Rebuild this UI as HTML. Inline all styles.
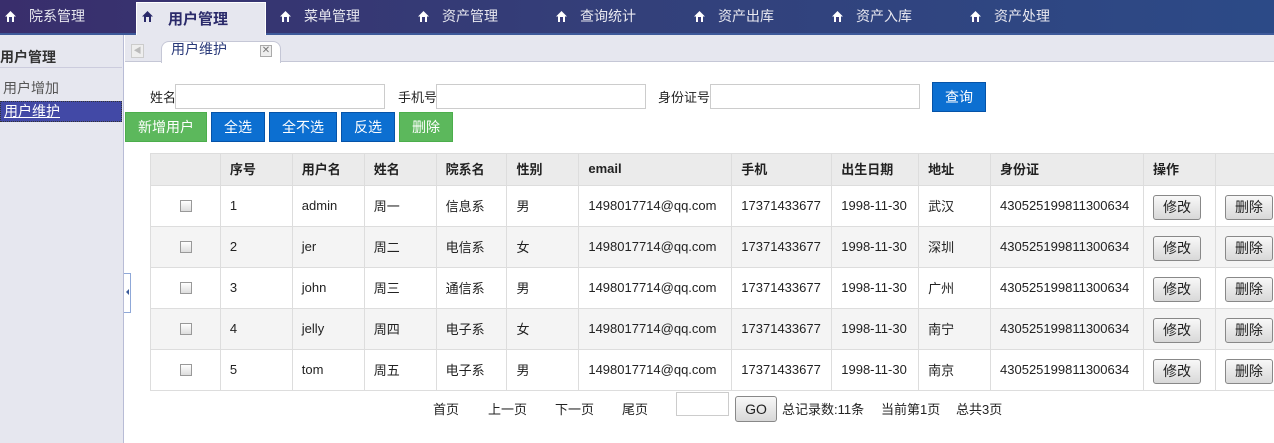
<!DOCTYPE html><html><head><meta charset="utf-8"><style>
*{margin:0;padding:0;box-sizing:border-box}
body{width:1274px;height:443px;overflow:hidden;background:#fff;font-family:"Liberation Sans","Noto Sans CJK SC",sans-serif;font-size:13px;color:#222;position:relative}
.top{position:absolute;left:0;top:0;width:1274px;height:35px;background:linear-gradient(90deg,#392e6c,#33407a 50%,#2c4a87);border-bottom:2px solid #3e5a9a}
.mi{position:absolute;top:0;height:33px;line-height:33px;color:#e8e8f0;font-size:14px}
.mi i{position:absolute;top:11px;left:0;width:11px;height:11px;display:block;line-height:0}
.mi i svg{display:block}
.mi span{position:absolute;left:24px;top:0;white-space:nowrap}
.act{position:absolute;left:136px;top:2px;width:130px;height:34px;background:#e6e7ef;border:1px solid #fff;border-bottom:none}
.act span{position:absolute;left:31px;top:5px;font-weight:bold;color:#2a2a6a;font-size:15px}
.side{position:absolute;left:0;top:35px;width:124px;height:408px;background:#e6e7ef;border-right:1px solid #b8bcd6}
.tabbar{position:absolute;left:125px;top:35px;width:1149px;height:27px;background:#e6e7ef;border-bottom:1px solid #c5c7d6}
.inp{position:absolute;top:84px;height:25px;border:1px solid #ccc;background:#fff}
.btn{position:absolute;top:112px;height:30px;line-height:28px;color:#fff;text-align:center;font-size:14px}
.g{background:#5cb85c;border:1px solid #4cae4c}.b{background:#0c6fd1;border:1px solid #0553a8}
table{position:absolute;left:150px;top:153px;border-collapse:collapse;width:1140px}
td,th{border:1px solid #ddd;height:41px;padding:0 0 2px 9px;text-align:left;font-size:13px;vertical-align:middle}
th{height:32px;background:#ebebeb;font-weight:bold;font-size:13px}
tr:nth-child(odd) td{background:#f4f4f4}
.cb{display:inline-block;width:12px;height:12px;border:1px solid #999;background:linear-gradient(#fff,#ddd);margin-left:20px;vertical-align:middle}
.ob{display:inline-block;width:48px;height:25px;border:1px solid #888;border-radius:3px;background:linear-gradient(#f8f8f8,#d8d8d8);text-align:center;line-height:23px;font-size:14px;vertical-align:middle;margin-top:4px}
.pg{position:absolute;top:399px;font-size:13px}
</style></head><body>
<div class="top"></div>
<div class="act"><span>用户管理</span></div>
<svg width="0" height="0" style="position:absolute"><defs><symbol id="h" viewBox="0 0 11 11"><path d="M5.5 0L0 5.5h2V11h7V5.5h2z" fill="#fff"/><rect x="4" y="6" width="3" height="5" fill="#3a3c7a"/></symbol></defs></svg>
<div class="mi" style="left:5px"><i><svg width="11" height="11"><use href="#h"/></svg></i><span>院系管理</span></div>
<div class="mi" style="left:142px"><i><svg width="11" height="11" viewBox="0 0 11 11"><path d="M5.5 0L0 5.5h2V11h7V5.5h2z" fill="#2a2a6a"/><rect x="4" y="6" width="3" height="5" fill="#e6e7ef"/></svg></i></div>
<div class="mi" style="left:280px"><i><svg width="11" height="11"><use href="#h"/></svg></i><span>菜单管理</span></div>
<div class="mi" style="left:418px"><i><svg width="11" height="11"><use href="#h"/></svg></i><span>资产管理</span></div>
<div class="mi" style="left:556px"><i><svg width="11" height="11"><use href="#h"/></svg></i><span>查询统计</span></div>
<div class="mi" style="left:694px"><i><svg width="11" height="11"><use href="#h"/></svg></i><span>资产出库</span></div>
<div class="mi" style="left:832px"><i><svg width="11" height="11"><use href="#h"/></svg></i><span>资产入库</span></div>
<div class="mi" style="left:970px"><i><svg width="11" height="11"><use href="#h"/></svg></i><span>资产处理</span></div>
<div class="side">
<div style="position:absolute;left:0;top:12px;font-weight:bold;font-size:14px;color:#333">用户管理</div>
<div style="position:absolute;left:0;top:32px;width:122px;height:1px;background:#fff;border-top:1px solid #ccd"></div>
<div style="position:absolute;left:3px;top:43px;font-size:14px;color:#555">用户增加</div>
<div style="position:absolute;left:0;top:66px;width:122px;height:21px;background:#4249a6;border:1px dotted #333;color:#fff;font-size:14px;padding-left:3px;line-height:19px;text-decoration:underline">用户维护</div>
</div>
<div class="tabbar">
<div style="position:absolute;left:6px;top:9px;width:13px;height:14px;border:1px solid #ccc;background:#eee;color:#bbb;font-size:8px;line-height:12px;text-align:center">◀</div>
<div style="position:absolute;left:36px;top:6px;width:120px;height:22px;background:#fff;border:1px solid #c5c7d6;border-bottom:none;border-radius:8px 8px 0 0"></div>
<div style="position:absolute;left:46px;top:4px;color:#2a3a7a;font-size:14px">用户维护</div>
<div style="position:absolute;left:135px;top:10px;width:12px;height:12px;border:1px solid #aaa;background:#eee;color:#777;font-size:10px;line-height:10px;text-align:center">✕</div>
</div>
<div style="position:absolute;left:124px;top:273px;width:7px;height:40px;border:1px solid #8fa8d8;border-left:none;background:#fff"></div>
<div style="position:absolute;left:126px;top:289px;width:0;height:0;border:3px solid transparent;border-right:3px solid #3a5a9a;border-left:none"></div>
<div style="position:absolute;left:150px;top:87px;font-size:13px">姓名</div>
<div class="inp" style="left:175px;width:210px"></div>
<div style="position:absolute;left:398px;top:87px;font-size:13px">手机号</div>
<div class="inp" style="left:436px;width:210px"></div>
<div style="position:absolute;left:658px;top:87px;font-size:13px">身份证号</div>
<div class="inp" style="left:710px;width:210px"></div>
<div class="btn b" style="left:932px;top:82px;width:54px;height:30px">查询</div>
<div class="btn g" style="left:125px;width:82px">新增用户</div>
<div class="btn b" style="left:211px;width:54px">全选</div>
<div class="btn b" style="left:269px;width:68px">全不选</div>
<div class="btn b" style="left:341px;width:54px">反选</div>
<div class="btn g" style="left:399px;width:54px">删除</div>
<table>
<colgroup><col style="width:70px"><col style="width:72px"><col style="width:72px"><col style="width:72px"><col style="width:71px"><col style="width:72px"><col style="width:153px"><col style="width:100px"><col style="width:87px"><col style="width:72px"><col style="width:153px"><col style="width:72px"><col style="width:74px"></colgroup>
<tr><th></th><th>序号</th><th>用户名</th><th>姓名</th><th>院系名</th><th>性别</th><th>email</th><th>手机</th><th>出生日期</th><th>地址</th><th>身份证</th><th>操作</th><th></th></tr>
<tr><td><span class="cb"></span></td><td>1</td><td>admin</td><td>周一</td><td>信息系</td><td>男</td><td>1498017714@qq.com</td><td>17371433677</td><td>1998-11-30</td><td>武汉</td><td>430525199811300634</td><td><span class="ob">修改</span></td><td><span class="ob">删除</span></td></tr>
<tr><td><span class="cb"></span></td><td>2</td><td>jer</td><td>周二</td><td>电信系</td><td>女</td><td>1498017714@qq.com</td><td>17371433677</td><td>1998-11-30</td><td>深圳</td><td>430525199811300634</td><td><span class="ob">修改</span></td><td><span class="ob">删除</span></td></tr>
<tr><td><span class="cb"></span></td><td>3</td><td>john</td><td>周三</td><td>通信系</td><td>男</td><td>1498017714@qq.com</td><td>17371433677</td><td>1998-11-30</td><td>广州</td><td>430525199811300634</td><td><span class="ob">修改</span></td><td><span class="ob">删除</span></td></tr>
<tr><td><span class="cb"></span></td><td>4</td><td>jelly</td><td>周四</td><td>电子系</td><td>女</td><td>1498017714@qq.com</td><td>17371433677</td><td>1998-11-30</td><td>南宁</td><td>430525199811300634</td><td><span class="ob">修改</span></td><td><span class="ob">删除</span></td></tr>
<tr><td><span class="cb"></span></td><td>5</td><td>tom</td><td>周五</td><td>电子系</td><td>男</td><td>1498017714@qq.com</td><td>17371433677</td><td>1998-11-30</td><td>南京</td><td>430525199811300634</td><td><span class="ob">修改</span></td><td><span class="ob">删除</span></td></tr>
</table>
<div class="pg" style="left:433px">首页</div>
<div class="pg" style="left:488px">上一页</div>
<div class="pg" style="left:555px">下一页</div>
<div class="pg" style="left:622px">尾页</div>
<div style="position:absolute;left:676px;top:392px;width:53px;height:24px;border:1px solid #ccc"></div>
<div style="position:absolute;left:735px;top:396px;width:42px;height:26px;border:1px solid #888;border-radius:3px;background:linear-gradient(#f8f8f8,#d8d8d8);text-align:center;line-height:24px;font-size:14px">GO</div>
<div class="pg" style="left:782px">总记录数:11条</div>
<div class="pg" style="left:881px">当前第1页</div>
<div class="pg" style="left:956px">总共3页</div>
</body></html>
